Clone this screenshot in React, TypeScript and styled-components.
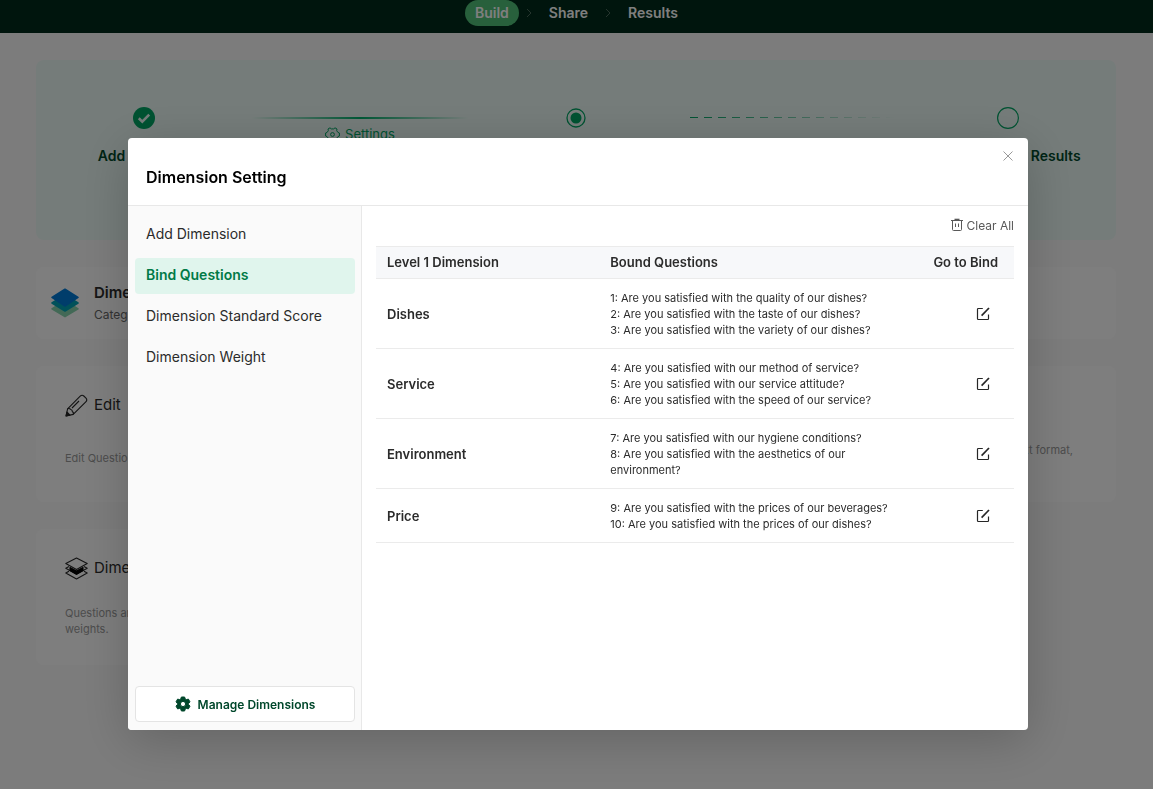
import React from "react";
import styled, { createGlobalStyle, css } from "styled-components";

const Global = createGlobalStyle`
  *, *::before, *::after { box-sizing: border-box; }
  body {
    margin: 0;
    background: #f9f9f9;
    color: #2b2b2b;
    font-family: Inter, "Liberation Sans", sans-serif;
    font-size: 13px;
  }
  button { font: inherit; color: inherit; border: 0; background: none; padding: 0; cursor: pointer; }
  h1, h2, h3, p, ul, ol { margin: 0; padding: 0; font: inherit; list-style: none; }
  svg { display: block; flex: none; }
`;

/* ---------- page behind the dialog ---------- */

const TopNav = styled.nav`
  display: flex;
  justify-content: center;
  align-items: center;
  gap: 7px;
  padding-bottom: 7px;
  background: #002b1a;
  color: #fff;
`;

const NavLink = styled.a<{ $active?: boolean }>`
  height: 26px;
  padding: 0 10px;
  border-radius: 13px;
  background: ${(p) => (p.$active ? "#50c078" : "transparent")};
  color: inherit;
  font-size: 14px;
  font-weight: 600;
  line-height: 26px;
  text-decoration: none;
`;

const Page = styled.main`
  padding: 27px 37px 60px 36px;
  display: flex;
  flex-direction: column;
  gap: 27px;
`;

const Hero = styled.section`
  display: grid;
  grid-template-columns: repeat(5, 1fr);
  min-height: 180px;
  padding-top: 46px;
  border-radius: 8px;
  background: #eaf9f4;
  color: #00492c;
`;

const Step = styled.div`
  display: flex;
  flex-direction: column;
  align-items: center;
  gap: 16px;
`;

const StepIcon = styled.span`
  display: flex;
  align-items: center;
  height: 24px;
`;

const StepLabel = styled.span`
  font-size: 14px;
  font-weight: 600;
  line-height: 20px;
  white-space: nowrap;
`;

const Connector = styled.div`
  display: flex;
  flex-direction: column;
  align-items: center;
  gap: 6px;
  padding-top: 11px;
`;

const SolidLine = styled.span`
  width: 100%;
  height: 2px;
  background: linear-gradient(90deg, transparent, #00b06c 50%, transparent);
`;

const DashedLine = styled.span`
  width: 94%;
  height: 1px;
  background: repeating-linear-gradient(90deg, #00a564 0 8px, transparent 8px 14px);
  mask-image: linear-gradient(90deg, #000, transparent);
`;

const SettingsLink = styled.a`
  display: flex;
  align-items: center;
  gap: 5px;
  color: #00a564;
  font-size: 13px;
  line-height: 18px;
  text-decoration: none;
`;

const Card = styled.section`
  border-radius: 8px;
  background: #fdfdfd;
`;

const InfoCard = styled(Card)`
  display: flex;
  align-items: center;
  gap: 14px;
  height: 72px;
  padding: 0 14px;
`;

const CardTitle = styled.h2<{ $strong?: boolean }>`
  font-size: 15px;
  font-weight: ${(p) => (p.$strong ? 600 : 400)};
  line-height: 24px;
`;

const CardNote = styled.p`
  color: #666;
  font-size: 12px;
  line-height: 20px;
`;

const CardGrid = styled.div`
  display: grid;
  grid-template-columns: repeat(3, 1fr);
  gap: 27px 26px;
`;

const ActionCard = styled(Card)`
  min-height: 136px;
  padding: 27px 29px 0;
`;

const ActionHead = styled.div`
  display: flex;
  align-items: center;
  gap: 6px;
  height: 24px;
`;

const ActionText = styled.p<{ $end?: boolean }>`
  display: flex;
  align-items: center;
  height: 32px;
  margin-top: 25px;
  color: #999;
  font-size: 11px;
  line-height: 16px;
  ${(p) =>
    p.$end &&
    css`
      justify-content: flex-end;
      align-items: flex-start;
      padding-right: 14px;
    `}
`;

/* ---------- dialog ---------- */

const Overlay = styled.div`
  position: fixed;
  inset: 0;
  display: flex;
  padding: 138px 125px 59px 128px;
  background: rgba(0, 0, 0, 0.5);
`;

const Dialog = styled.div`
  flex: 1;
  display: flex;
  flex-direction: column;
  overflow: hidden;
  border-radius: 4px;
  background: #fff;
  box-shadow: 0 10px 50px rgba(0, 0, 0, 0.2);
`;

const DialogHeader = styled.header`
  display: flex;
  justify-content: space-between;
  align-items: flex-start;
  height: 68px;
  padding: 12px 14px 0 18px;
  border-bottom: 1px solid #e8e8e8;
`;

const DialogTitle = styled.h1`
  padding-top: 15px;
  color: #000;
  font-size: 16px;
  font-weight: 600;
  line-height: 24px;
`;

const CloseButton = styled.button`
  padding: 0;
  color: #999;
`;

const DialogBody = styled.div`
  flex: 1;
  display: flex;
`;

const Sidebar = styled.aside`
  display: flex;
  flex-direction: column;
  justify-content: space-between;
  width: 234px;
  padding: 11px 6px 8px 7px;
  border-right: 1px solid #e8e8e8;
  background: #fafafa;
`;

const Menu = styled.ul`
  display: flex;
  flex-direction: column;
  gap: 5px;
`;

const MenuItem = styled.button<{ $active?: boolean }>`
  display: block;
  width: 100%;
  height: 36px;
  padding: 0 11px 2px;
  border-radius: 4px;
  text-align: left;
  font-size: 14px;
  line-height: 34px;
  ${(p) =>
    p.$active &&
    css`
      background: #e0f5ed;
      color: #007a47;
      font-weight: 600;
    `}
`;

const ManageButton = styled.button`
  display: flex;
  justify-content: center;
  align-items: center;
  gap: 7px;
  height: 36px;
  border: 1px solid #e4e4e4;
  border-radius: 4px;
  background: #fff;
  color: #00472b;
  font-size: 12px;
  font-weight: 600;
`;

const Content = styled.div`
  flex: 1;
  padding: 10px 14px;
`;

const ToolRow = styled.div`
  display: flex;
  justify-content: flex-end;
  height: 18px;
  margin-bottom: 12px;
`;

const ClearButton = styled.button`
  display: flex;
  align-items: center;
  gap: 3px;
  color: #595959;
  font-size: 12px;
`;

const Table = styled.table`
  width: 100%;
  table-layout: fixed;
  border-spacing: 0;
`;

const HeadCell = styled.th<{ $width: string; $end?: boolean }>`
  width: ${(p) => p.$width};
  height: 33px;
  padding: 0 ${(p) => (p.$end ? 16 : 11)}px 2px 11px;
  border: solid #ebebeb;
  border-width: 1px 0;
  background: #f7f8fa;
  font-size: 13px;
  font-weight: 600;
  text-align: ${(p) => (p.$end ? "right" : "left")};
  white-space: nowrap;
`;

const Cell = styled.td`
  padding: 11px 11px 10px;
  border-bottom: 1px solid #ebebeb;
  font-size: 11px;
  line-height: 16px;
`;

const NameCell = styled(Cell)`
  font-size: 13px;
  font-weight: 600;
`;

const ActionCell = styled(Cell)`
  padding: 0 24px 0 0;
`;

const BindButton = styled.button`
  display: block;
  margin-left: auto;
`;

/* ---------- icons ---------- */

const Chevron = () => (
  <svg width="6" height="10" viewBox="0 0 6 10" fill="none" stroke="#4c6b5c" strokeWidth="1">
    <path d="M1 1l4 4-4 4" />
  </svg>
);

const DoneIcon = () => (
  <svg width="22" height="22" viewBox="0 0 22 22">
    <circle cx="11" cy="11" r="11" fill="#00a564" />
    <path d="M5.8 11.2l3.5 3.4 6.9-7" fill="none" stroke="#eaf9f4" strokeWidth="2.6" />
  </svg>
);

const CurrentIcon = () => (
  <svg width="20" height="20" viewBox="0 0 20 20">
    <circle cx="10" cy="10" r="9" fill="none" stroke="#00a564" strokeWidth="1.3" />
    <circle cx="10" cy="10" r="5.5" fill="#00a564" />
  </svg>
);

const PendingIcon = () => (
  <svg width="22" height="22" viewBox="0 0 22 22">
    <circle cx="11" cy="11" r="10.4" fill="none" stroke="#00a564" strokeWidth="1.2" />
  </svg>
);

const GearOutline = () => (
  <svg width="15" height="15" viewBox="0 0 15 15" fill="none" stroke="currentColor" strokeWidth="1">
    <path
      strokeLinejoin="round"
      d="M5 .8L6.300 1.900H8.700L10 .8L12 2L11.700 3.700L12.900 5.400L14.400 6V9L12.900 9.600L11.700 11.300L12 13L10 14.200L8.700 13.100H6.300L5 14.200L3 13L3.300 11.300L2.100 9.600L.6 9V6L2.100 5.400L3.300 3.700L3 2Z"
    />
    <circle cx="7.5" cy="7.5" r="1.9" />
  </svg>
);

const GearSolid = () => (
  <svg width="16" height="16" viewBox="0 0 16 16">
    <path
      fill="currentColor"
      fillRule="evenodd"
      stroke="currentColor"
      strokeWidth="1"
      strokeLinejoin="round"
      d="M6.4 1H9.6L10.2 2.9L11.4 3.6L13.4 3.1L15 5.9L13.6 7.3V8.7L15 10.1L13.4 12.9L11.4 12.4L10.2 13.1L9.6 15H6.4L5.8 13.1L4.6 12.4L2.6 12.9L1 10.1L2.4 8.7V7.3L1 5.9L2.6 3.1L4.6 3.6L5.8 2.9ZM8 5.4a2.6 2.6 0 1 0 0 5.2a2.6 2.6 0 0 0 0-5.2Z"
    />
  </svg>
);

const LayersColor = () => (
  <svg width="30" height="30" viewBox="0 0 30 30" strokeLinejoin="round" strokeWidth="1.6">
    <path d="M15 12.4l13 8.4-13 7.8L2 20.8z" fill="#86d3ac" stroke="#86d3ac" />
    <path d="M15 7l13 8-13 8-13-8z" fill="#00a3b4" stroke="#00a3b4" />
    <path d="M15 1.2L28 9.4l-13 8.6L2 9.4z" fill="#007ad6" stroke="#007ad6" />
  </svg>
);

const PencilIcon = () => (
  <svg width="23" height="23" viewBox="0 0 23 23" fill="none" stroke="#262626" strokeWidth="1.1" strokeLinejoin="round">
    <path d="M1 22l1.6-7.2L15.2 2.2Q17 .4 18.8 2l2.2 2.2Q22.6 6 20.8 7.8L8.2 20.4Z" />
    <path d="M2.6 14.8Q4.5 14 5.4 15.2Q7.6 16 7.4 17.800Q9 18.5 8.2 20.4M7 14L14 7" />
    <path d="M1 22l.9-4 3.1 3.1z" fill="#262626" />
  </svg>
);

const LayersMono = () => (
  <svg width="23" height="23" viewBox="0 0 23 23" fill="none" stroke="#262626" strokeWidth="1.1" strokeLinejoin="round">
    <path d="M11.5 1L22.2 6.6L11.5 12.4L.8 6.6Z" />
    <path d="M4 9.6L.8 11.3L11.5 17.2L22.2 11.3L19 9.6" />
    <path d="M4 14.2L.8 16L11.5 22L22.2 16L19 14.2" />
    <path d="M5 10.6L11.5 14L18 10.6L18 13.6L11.5 17.2L5 13.6Z" fill="#000" stroke="#000" />
  </svg>
);

const CloseIcon = () => (
  <svg width="12" height="12" viewBox="0 0 12 12" fill="none" stroke="currentColor" strokeWidth="1">
    <path d="M1.5 1.5l9 9M10.5 1.5l-9 9" />
  </svg>
);

const TrashIcon = () => (
  <svg width="12" height="14" viewBox="0 0 12 14" fill="none" stroke="currentColor" strokeWidth="1">
    <path d="M0 2.5h12M1.5 2.5v9q0 1 1 1h7q1 0 1-1v-9M4.5 5.5v3.5M7.5 5.5v3.5" />
    <path d="M3.5 1.5h5" strokeWidth="1.6" />
  </svg>
);

const EditIcon = () => (
  <svg width="14" height="14" viewBox="0 0 14 14" fill="none" stroke="#262626">
    <path d="M6.8 1.5H2.3q-.8 0-.8.8v9.4q0 .8.8.8h9.4q.8 0 .8-.8V7.4" strokeWidth="1.2" />
    <path d="M5.6 8.6L13 1" strokeWidth="1.7" />
  </svg>
);

/* ---------- data ---------- */

const menu = ["Add Dimension", "Bind Questions", "Dimension Standard Score", "Dimension Weight"];

const rows = [
  {
    name: "Dishes",
    questions: [
      "1: Are you satisfied with the quality of our dishes?",
      "2: Are you satisfied with the taste of our dishes?",
      "3: Are you satisfied with the variety of our dishes?",
    ],
  },
  {
    name: "Service",
    questions: [
      "4: Are you satisfied with our method of service?",
      "5: Are you satisfied with our service attitude?",
      "6: Are you satisfied with the speed of our service?",
    ],
  },
  {
    name: "Environment",
    questions: [
      "7: Are you satisfied with our hygiene conditions?",
      "8: Are you satisfied with the aesthetics of our environment?",
    ],
  },
  {
    name: "Price",
    questions: [
      "9: Are you satisfied with the prices of our beverages?",
      "10: Are you satisfied with the prices of our dishes?",
    ],
  },
];

export default function App() {
  return (
    <>
      <Global />
      <TopNav>
        <NavLink href="#build" $active>Build</NavLink>
        <Chevron />
        <NavLink href="#share">Share</NavLink>
        <Chevron />
        <NavLink href="#results">Results</NavLink>
      </TopNav>

      <Page>
        <Hero>
          <Step>
            <StepIcon><DoneIcon /></StepIcon>
            <StepLabel>Add Contents</StepLabel>
          </Step>
          <Connector>
            <SolidLine />
            <SettingsLink href="#settings"><GearOutline />Settings</SettingsLink>
          </Connector>
          <Step>
            <StepIcon><CurrentIcon /></StepIcon>
          </Step>
          <Connector>
            <DashedLine />
          </Connector>
          <Step>
            <StepIcon><PendingIcon /></StepIcon>
            <StepLabel>Statistics and Results</StepLabel>
          </Step>
        </Hero>

        <InfoCard>
          <LayersColor />
          <div>
            <CardTitle $strong>Dimension</CardTitle>
            <CardNote>Category</CardNote>
          </div>
        </InfoCard>

        <CardGrid>
          <ActionCard>
            <ActionHead><PencilIcon /><CardTitle>Edit</CardTitle></ActionHead>
            <ActionText>Edit Questions</ActionText>
          </ActionCard>
          <ActionCard />
          <ActionCard>
            <ActionHead />
            <ActionText $end>text format,</ActionText>
          </ActionCard>
          <ActionCard>
            <ActionHead><LayersMono /><CardTitle>Dimension</CardTitle></ActionHead>
            <ActionText>Questions are grouped by dimensions and their weights.</ActionText>
          </ActionCard>
        </CardGrid>
      </Page>

      <Overlay>
        <Dialog role="dialog" aria-modal="true" aria-labelledby="dialog-title">
          <DialogHeader>
            <DialogTitle id="dialog-title">Dimension Setting</DialogTitle>
            <CloseButton type="button" aria-label="Close"><CloseIcon /></CloseButton>
          </DialogHeader>
          <DialogBody>
            <Sidebar>
              <Menu>
                {menu.map((label) => (
                  <li key={label}>
                    <MenuItem type="button" $active={label === "Bind Questions"}>{label}</MenuItem>
                  </li>
                ))}
              </Menu>
              <ManageButton type="button"><GearSolid />Manage Dimensions</ManageButton>
            </Sidebar>
            <Content>
              <ToolRow>
                <ClearButton type="button"><TrashIcon />Clear All</ClearButton>
              </ToolRow>
              <Table>
                <thead>
                  <tr>
                    <HeadCell $width="35%">Level 1 Dimension</HeadCell>
                    <HeadCell $width="50%">Bound Questions</HeadCell>
                    <HeadCell $width="15%" $end>Go to Bind</HeadCell>
                  </tr>
                </thead>
                <tbody>
                  {rows.map((row) => (
                    <tr key={row.name}>
                      <NameCell>{row.name}</NameCell>
                      <Cell>
                        <ul>
                          {row.questions.map((q) => <li key={q}>{q}</li>)}
                        </ul>
                      </Cell>
                      <ActionCell>
                        <BindButton type="button" aria-label={`Bind questions to ${row.name}`}><EditIcon /></BindButton>
                      </ActionCell>
                    </tr>
                  ))}
                </tbody>
              </Table>
            </Content>
          </DialogBody>
        </Dialog>
      </Overlay>
    </>
  );
}
